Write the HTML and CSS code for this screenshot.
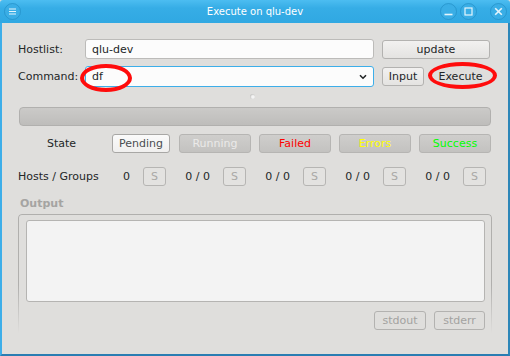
FILE: index.html
```html
<!DOCTYPE html>
<html>
<head>
<meta charset="utf-8">
<link rel="stylesheet" href="styles.css">
</head>
<body>
<div class="window">
  <div class="titlebar">
    <div class="tb-left">
      <svg class="tb-btn" width="17" height="17" viewBox="0 0 17 17"><circle cx="8.5" cy="8.5" r="8" fill="#3aaee6" stroke="#1f8ac2" stroke-opacity="0.6"/><path d="M5 6h7M5 8.5h7M5 11h7" stroke="#e6f5fc" stroke-width="1.1"/></svg>
    </div>
    <div class="title">Execute on qlu-dev</div>
    <div class="tb-right">
      <svg class="tb-btn" width="17" height="17" viewBox="0 0 17 17"><circle cx="8.5" cy="8.5" r="8" fill="#3aaee6" stroke="#1f8ac2" stroke-opacity="0.6"/><path d="M4.5 11.5h8" stroke="#e6f5fc" stroke-width="1.6"/></svg>
      <svg class="tb-btn" width="17" height="17" viewBox="0 0 17 17"><circle cx="8.5" cy="8.5" r="8" fill="#3aaee6" stroke="#1f8ac2" stroke-opacity="0.6"/><rect x="5" y="5" width="7" height="7" fill="none" stroke="#e6f5fc" stroke-width="1.2"/></svg>
      <svg class="tb-btn close" width="17" height="17" viewBox="0 0 17 17"><circle cx="8.5" cy="8.5" r="8" fill="#3aaee6" stroke="#1f8ac2" stroke-opacity="0.6"/><path d="M5.2 5.2l6.6 6.6M11.8 5.2l-6.6 6.6" stroke="#e6f5fc" stroke-width="1.6"/></svg>
    </div>
  </div>
  <div class="body">
    <div class="row r1">
      <span class="lbl">Hostlist:</span>
      <div class="field">qlu-dev</div>
      <button class="btn update">update</button>
    </div>
    <div class="row r2">
      <span class="lbl">Command:</span>
      <div class="field combo"><span>df</span>
        <svg class="chev" width="8" height="6" viewBox="0 0 8 6"><path d="M1 1.2l3 3 3-3" fill="none" stroke="#232627" stroke-width="1.6"/></svg>
      </div>
      <button class="btn input">Input</button>
      <button class="btn exec">Execute</button>
      <span class="mark m1"></span>
      <span class="mark m2"></span>
    </div>
    <div class="handle"><span class="dot"></span></div>
    <div class="progress"></div>
    <div class="row state">
      <span class="state-lbl">State</span>
      <button class="sbtn pending">Pending</button>
      <button class="sbtn off running">Running</button>
      <button class="sbtn off failed">Failed</button>
      <button class="sbtn off errors">Errors</button>
      <button class="sbtn off success">Success</button>
    </div>
    <div class="row hosts">
      <span class="hosts-lbl">Hosts / Groups</span>
      <div class="cell first"><span class="num">0</span><button class="s">S</button></div>
      <div class="cell"><span class="num">0 / 0</span><button class="s">S</button></div>
      <div class="cell"><span class="num">0 / 0</span><button class="s">S</button></div>
      <div class="cell"><span class="num">0 / 0</span><button class="s">S</button></div>
      <div class="cell"><span class="num">0 / 0</span><button class="s">S</button></div>
    </div>
    <div class="out-lbl">Output</div>
    <div class="frame">
      <div class="textarea"></div>
      <div class="frame-btns">
        <button class="fbtn">stdout</button>
        <button class="fbtn">stderr</button>
      </div>
    </div>
  </div>
</div>
</body>
</html>
```

FILE: styles.css
```css
* { box-sizing: border-box; margin: 0; padding: 0; }
html, body { width: 510px; height: 356px; overflow: hidden; }
body {
  font-family: "DejaVu Sans", sans-serif;
  font-size: 11px;
  color: #232627;
  background: #dfdedc;
}
button { font-family: "DejaVu Sans", sans-serif; font-size: 11px; }

.window { width: 510px; height: 356px; display: flex; flex-direction: column; }

.titlebar {
  height: 23px;
  flex: none;
  display: grid;
  grid-template-columns: 1fr auto 1fr;
  align-items: center;
  background: linear-gradient(#4cbdf1, #36ade6 35%, #30a8e2);
  border-radius: 3px 3px 0 0;
}
.tb-left { padding-left: 4px; display: flex; }
.tb-right { display: flex; justify-content: flex-end; padding-right: 3px; }
.tb-btn { display: block; }
.tb-right .tb-btn { margin-left: 3px; }
.tb-right .close { margin-left: 13px; }
.title { color: #ffffff; font-size: 10px; letter-spacing: 0; }

.body {
  flex: 1;
  border-left: 2px solid #3daee9;
  border-right: 2px solid #2d86b8;
  border-bottom: 2px solid #2a7db2;
  padding: 16px 17px 0 16px;
  display: flex;
  flex-direction: column;
}

.row { display: flex; align-items: center; }
.lbl { width: 67px; flex: none; }
.field {
  width: 289px;
  height: 20px;
  background: #fcfcfc;
  border: 1px solid #bcbbb9;
  border-radius: 3px;
  padding-left: 6px;
  display: flex;
  align-items: center;
}
.btn {
  height: 19px;
  border: 1px solid #b3b2b0;
  border-radius: 3px;
  background: linear-gradient(#f2f1f0, #e4e3e1);
  color: #232627;
  flex: none;
}
.r1 { height: 20px; }
.update { width: 108px; margin-left: 8px; }

.r2 { height: 21px; margin-top: 7px; position: relative; }
.combo { height: 21px; border-color: #3daee9; justify-content: space-between; padding-right: 6px; }
.chev { display: block; }
.input { width: 42px; margin-left: 8px; }
.exec { width: 59px; margin-left: 7px; border-color: transparent; background: transparent; }

.mark {
  position: absolute;
  border: 4px solid #ff0c0c;
  border-radius: 50%;
  filter: blur(0.6px);
}
.m1 { left: 62px; top: -2px; width: 52px; height: 28px; }
.m2 { left: 410px; top: -4px; width: 69px; height: 27px; }

.handle { height: 20px; display: flex; justify-content: center; align-items: center; }
.dot {
  width: 5px; height: 5px; border-radius: 50%;
  background: radial-gradient(circle at 60% 60%, #f4f4f4 30%, #b9b8b6 80%);
  margin-right: 4px; margin-bottom: 1px;
}

.progress {
  height: 19px;
  margin-left: 1px;
  width: 472px;
  border: 1px solid #b1b0ae;
  border-radius: 4px;
  background: linear-gradient(#cbcac8, #bebdbb);
}

.state { height: 19px; margin-top: 8px; }
.state-lbl { width: 94px; padding-left: 29px; flex: none; }
.sbtn {
  height: 19px;
  width: 72px;
  border-radius: 3px;
  margin-left: 8px;
  border: 1px solid #b6b5b3;
  background: linear-gradient(#cfcecc, #c3c2c0);
  color: #ebeae9;
}
.pending {
  width: 58px; margin-left: 0;
  background: linear-gradient(#fafafa, #f0efee);
  border-color: #a8a7a5;
  color: #4a4d50;
}
.running { margin-left: 9px; }
.failed { color: #ff0000; }
.errors { color: #ffff00; }
.success { color: #00ff00; }

.hosts { height: 19px; margin-top: 14px; }
.hosts-lbl { width: 86px; flex: none; white-space: nowrap; }
.cell { width: 80px; display: flex; justify-content: flex-end; align-items: center; flex: none; }
.cell.first { width: 62px; }
.num { margin-right: 13px; color: #232627; }
.s {
  width: 23px; height: 19px;
  border: 1px solid #b6b5b3;
  border-radius: 3px;
  background: #e3e2e0;
  color: #a9a8a6;
}

.out-lbl {
  margin-top: 11px;
  height: 13px;
  line-height: 13px;
  padding-left: 2px;
  font-weight: bold;
  color: #a5a4a2;
}

.frame {
  margin-top: 4px;
  width: 474px;
  position: relative;
  padding: 6px 7px 3px 8px;
}
.frame::before {
  content: "";
  position: absolute;
  inset: 0;
  border: 1px solid #b0afad;
  border-bottom: 0;
  border-radius: 4px 4px 0 0;
  -webkit-mask-image: linear-gradient(to bottom, #000 60%, transparent);
  mask-image: linear-gradient(to bottom, #000 60%, transparent);
  pointer-events: none;
}
.textarea {
  height: 82px;
  background: #f3f3f3;
  border: 1px solid #b5b4b2;
  border-radius: 3px;
}
.frame-btns { display: flex; justify-content: flex-end; margin-top: 9px; }
.fbtn {
  height: 19px;
  border: 1px solid #b3b2b0;
  border-radius: 3px;
  background: transparent;
  color: #a3a2a0;
  width: 51px;
  margin-left: 8px;
}
.fbtn:first-child { width: 52px; }
```
